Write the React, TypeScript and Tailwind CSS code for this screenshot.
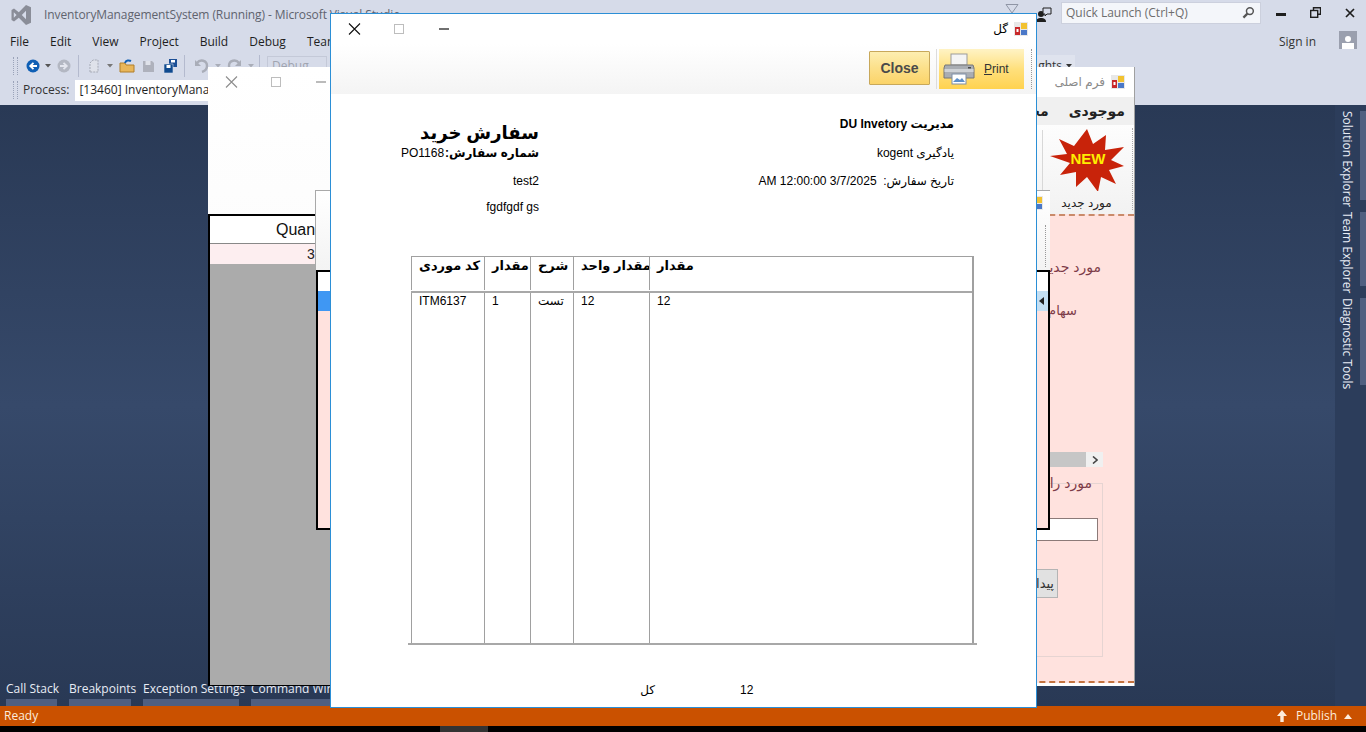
const sans = { fontFamily: '"Open Sans", sans-serif' };

function FormIcon({ className = '' }: { className?: string }) {
  return (
    <svg viewBox="0 0 14 14" className={className}>
      <rect width="14" height="14" fill="#e8e8e8" />
      <rect x="7" y="1" width="6" height="6" fill="#f2c230" />
      <rect x="1" y="5" width="5" height="8" fill="#c8282a" />
      <rect x="7" y="8" width="6" height="5" fill="#4a78c8" />
      <rect x="2.5" y="7" width="2" height="3" fill="#fff" />
    </svg>
  );
}

function Caret({ color = '#555' }: { color?: string }) {
  return (
    <svg viewBox="0 0 6 4" className="w-[6px] h-[4px]">
      <path d="M0 0h6L3 3.5z" fill={color} />
    </svg>
  );
}

function Sep() {
  return <div className="w-px h-[22px] bg-[#b4bace]" />;
}

function Grip() {
  return <div className="w-[5px] self-stretch my-[3px] border-x border-dotted border-[#9aa2b8]" />;
}

function VsLogo() {
  return (
    <svg viewBox="0 0 22 22" className="w-[22px] h-[22px]">
      <path
        d="M16 1l5 2.2v15.6L16 21 8.8 13.8 4 17.5 1.5 16V6L4 4.5 8.8 8.2zM16 6.8L11.8 11 16 15.2zM3.8 8.2v5.6L6.6 11z"
        fill="#8a8d98"
        fillRule="evenodd"
      />
    </svg>
  );
}

function Printer() {
  return (
    <svg viewBox="0 0 32 32" className="w-[32px] h-[32px]">
      <rect x="8" y="1" width="16" height="11" fill="#f4f4f4" stroke="#9b9b9b" />
      <path d="M2 12h28l1 3v10H1V15z" fill="#a9adb3" stroke="#777" />
      <rect x="1.5" y="16" width="29" height="3" fill="#cfd2d6" />
      <rect x="25" y="14" width="3" height="1.5" fill="#4a4a4a" />
      <rect x="9" y="21" width="14" height="10" fill="#fff" stroke="#7f8fa8" />
      <path d="M10 29l4-4 3 2 2-2 3 4z" fill="#5d8fc9" />
    </svg>
  );
}

function NewBurst() {
  return (
    <svg viewBox="0 0 80 64" className="w-[80px] h-[64px]">
      <path
        d="M40 2l6 15 13-9-1 15 19-3-13 13 13 6-15 4 7 14-15-7-3 15-11-15-11 10v-15l-16 3 10-12L3 29l17-2-8-15 15 7z"
        fill="#c8230a"
      />
      <text
        x="41"
        y="37"
        textAnchor="middle"
        fontSize="15"
        fontWeight="900"
        fontFamily='"Liberation Sans", sans-serif'
        fill="#ffee00"
      >
        NEW
      </text>
    </svg>
  );
}

function WinButtons({ tone }: { tone: string }) {
  return (
    <svg viewBox="0 0 102 14" className="w-[102px] h-[14px]">
      <path d="M1 1.5l11 11M12 1.5l-11 11" stroke={tone} strokeWidth="1.1" fill="none" />
      <rect x="46.5" y="2.5" width="9" height="9" fill="none" stroke="#bdbdbd" />
      <path d="M91 7h10" stroke={tone} strokeWidth="1.2" />
    </svg>
  );
}

const menus = ['File', 'Edit', 'View', 'Project', 'Build', 'Debug', 'Team'];
const bottomTabs = [
  { label: 'Call Stack', w: 'w-[51px]' },
  { label: 'Breakpoints', w: 'w-[62px]' },
  { label: 'Exception Settings', w: 'w-[96px]' },
  { label: 'Command Window', w: 'w-[90px]' },
];
const sideTabs = [
  { label: 'Solution Explorer', h: 'h-[89px]' },
  { label: 'Team Explorer', h: 'h-[74px]' },
  { label: 'Diagnostic Tools', h: 'h-[87px]' },
];

function Shell() {
  return (
    <div className="absolute inset-0 flex flex-col bg-[#d6dbe9] text-[#1e1e1e] text-[12px]" style={sans}>
      <div className="h-[30px] flex items-center shrink-0">
        <div className="ml-[10px] w-[34px]">
          <VsLogo />
        </div>
        <span className="text-[#60636e] text-[12px] whitespace-nowrap tracking-[-0.1px]">
          InventoryManagementSystem (Running) - Microsoft Visual Studio
        </span>
        <div className="ml-auto flex items-center">
          <svg viewBox="0 0 14 10" className="w-[14px] h-[10px] mr-[17px] -mt-[12px]">
            <path d="M1 .5h12L7 9z" fill="none" stroke="#8f95a5" />
          </svg>
          <svg viewBox="0 0 16 16" className="w-[16px] h-[16px] mr-[9px]">
            <circle cx="5" cy="7" r="3" fill="#1e1e1e" />
            <path d="M0 15c0-3 2-4 5-4s5 1 5 4z" fill="#1e1e1e" />
            <path d="M7 1h8v6h-4l-2 2V7H7z" fill="#d6dbe9" stroke="#1e1e1e" />
          </svg>
          <div className="w-[200px] h-[22px] -mt-[5px] bg-[#f4f6fa] border border-[#ccd0dd] flex items-center justify-between pl-[4px] pr-[5px] text-[#6d6d6d]">
            <span>Quick Launch (Ctrl+Q)</span>
            <svg viewBox="0 0 14 14" className="w-[13px] h-[13px]">
              <circle cx="8.5" cy="5.5" r="3.7" fill="none" stroke="#555" strokeWidth="1.6" />
              <path d="M5.8 8.2L1.5 12.5" stroke="#555" strokeWidth="2.4" />
            </svg>
          </div>
          <div className="w-[105px] flex items-center -mt-[5px] pl-[15px]">
            <div className="w-[10px] h-[3px] bg-[#1e1e1e] mt-[3px]" />
            <svg viewBox="0 0 11 11" className="w-[11px] h-[11px] ml-[24px]">
              <path d="M3.5 3V.8h7v6.4H8" fill="none" stroke="#1e1e1e" strokeWidth="1.4" />
              <rect x=".7" y="3.5" width="7" height="6.8" fill="none" stroke="#1e1e1e" strokeWidth="1.4" />
            </svg>
            <svg viewBox="0 0 10 10" className="w-[10px] h-[10px] ml-[24px]">
              <path d="M1 1l8 8M9 1L1 9" stroke="#1e1e1e" strokeWidth="1.7" />
            </svg>
          </div>
        </div>
      </div>

      <div className="h-[24px] flex items-center shrink-0">
        <div className="flex pl-[10px] gap-[21px] text-[12px]">
          {menus.map((m) => (
            <span key={m}>{m}</span>
          ))}
        </div>
        <span className="ml-auto text-[#333]">Sign in</span>
        <div className="ml-[23px] mr-[9px] -mt-[4px] w-[18px] h-[18px] bg-[#9a9fae] flex flex-col items-center justify-end overflow-hidden">
          <div className="w-[6px] h-[6px] rounded-full bg-white mb-px" />
          <div className="w-[12px] h-[6px] bg-white" />
        </div>
      </div>

      <div className="h-[24px] flex items-center shrink-0 pl-[13px]">
        <Grip />
        <svg viewBox="0 0 14 14" className="w-[14px] h-[14px] ml-[8px]">
          <circle cx="7" cy="7" r="6.5" fill="#0f5fb5" />
          <path d="M11 7H5M7.5 3.8L4.2 7l3.3 3.2" stroke="#fff" strokeWidth="1.8" fill="none" />
        </svg>
        <div className="ml-[5px]">
          <Caret />
        </div>
        <svg viewBox="0 0 14 14" className="w-[14px] h-[14px] ml-[6px]">
          <circle cx="7" cy="7" r="6.5" fill="#b3b7c2" />
          <path d="M3 7h6M6.5 3.8L9.8 7l-3.3 3.2" stroke="#e4e6ee" strokeWidth="1.8" fill="none" />
        </svg>
        <div className="ml-[7px]">
          <Sep />
        </div>
        <svg viewBox="0 0 14 14" className="w-[14px] h-[14px] ml-[8px]">
          <path d="M3 13V4l3-3h5v12z" fill="#dfe2ea" stroke="#a5a9b5" strokeDasharray="2 1" />
        </svg>
        <div className="ml-[6px]">
          <Caret color="#777" />
        </div>
        <svg viewBox="0 0 16 14" className="w-[16px] h-[14px] ml-[6px]">
          <path d="M1 4h5l1 2h8v7H1z" fill="#e8b65a" stroke="#b07f2a" />
          <path d="M6 4c1-3 4-3 6-2" stroke="#0f5fb5" strokeWidth="2" fill="none" />
        </svg>
        <svg viewBox="0 0 13 13" className="w-[13px] h-[13px] ml-[7px]">
          <path d="M1 1h9l2 2v9H1z" fill="#aeb1bc" />
          <rect x="3.5" y="1" width="5" height="4" fill="#dfe2ea" />
        </svg>
        <svg viewBox="0 0 14 14" className="w-[14px] h-[14px] ml-[9px]">
          <path d="M5 0h8v8H5z" fill="#1c4f96" />
          <path d="M0 5h9v9H0z" fill="#0f4a8f" stroke="#d6dbe9" strokeWidth=".6" />
          <rect x="2.5" y="6" width="4" height="3" fill="#fff" />
          <rect x="7" y="1" width="4" height="2.5" fill="#fff" />
        </svg>
        <div className="ml-[6px]">
          <Sep />
        </div>
        <svg viewBox="0 0 15 14" className="w-[15px] h-[14px] ml-[9px]">
          <path d="M3 4c3-4 10-3 10 3 0 3-2 5-5 6" fill="none" stroke="#a9adb8" strokeWidth="2.4" />
          <path d="M1 1v6h6z" fill="#a9adb8" />
        </svg>
        <div className="ml-[6px]">
          <Caret color="#a9adb8" />
        </div>
        <svg viewBox="0 0 15 14" className="w-[15px] h-[14px] ml-[6px]">
          <path d="M12 4C9 0 2 1 2 7c0 3 2 5 5 6" fill="none" stroke="#a9adb8" strokeWidth="2.4" />
          <path d="M14 1v6H8z" fill="#a9adb8" />
        </svg>
        <div className="ml-[6px]">
          <Caret color="#a9adb8" />
        </div>
        <div className="ml-[5px]">
          <Sep />
        </div>
        <div className="ml-[7px] w-[60px] h-[20px] border border-[#c4c9d8] text-[#a0a4b0] pl-[4px] leading-[18px]">
          Debug
        </div>
        <div className="ml-auto mr-[291px] w-[39px] h-[22px] bg-[#dfe3ee] flex items-center justify-end gap-[4px] pr-[3px] text-[#333]">
          <span>ghts</span>
          <Caret color="#333" />
        </div>
      </div>

      <div className="h-[27px] flex items-center shrink-0 pl-[13px] pb-[3px]">
        <Grip />
        <span className="ml-[5px] text-[#333]">Process:</span>
        <div className="ml-[6px] w-[280px] h-[21px] bg-white pl-[4px] leading-[20px] whitespace-nowrap overflow-hidden">
          [13460] InventoryManagementSystem.exe
        </div>
      </div>

      <div className="flex-1 flex bg-gradient-to-b from-[#293955] via-[#36496a] to-[#293955] relative">
        <div className="flex-1 flex items-end gap-[12px] pl-[6px]">
          {bottomTabs.map((t) => (
            <div key={t.label} className={`${t.w} shrink-0 h-[26px] flex flex-col justify-between`}>
              <span className="text-[#e8ecf5] leading-[17px] whitespace-nowrap">{t.label}</span>
              <div className="h-[7px] bg-[#4f5f80]" />
            </div>
          ))}
        </div>
        <div className="w-[31px] flex flex-col gap-[12px] pt-[6px] bg-[#2c3d5b] shrink-0">
          {sideTabs.map((t) => (
            <div key={t.label} className={`${t.h} flex`}>
              <span className="[writing-mode:vertical-rl] text-[#e8ecf5] leading-[25px] w-[25px] whitespace-nowrap">
                {t.label}
              </span>
              <div className="w-[6px] bg-[#4f5f80]" />
            </div>
          ))}
        </div>
      </div>

      <div className="h-[20px] bg-[#ca5100] text-[#fdecdc] flex items-center justify-between pl-[4px] pr-[14px] shrink-0">
        <span>Ready</span>
        <div className="flex items-center">
          <svg viewBox="0 0 10 12" className="w-[10px] h-[12px] mr-[9px]">
            <path d="M5 0l5 6H6.7v6H3.3V6H0z" fill="#fdecdc" />
          </svg>
          <span>Publish</span>
          <svg viewBox="0 0 8 5" className="w-[8px] h-[5px] ml-[7px]">
            <path d="M0 5h8L4 0z" fill="#fdecdc" />
          </svg>
        </div>
      </div>
      <div className="h-[6px] bg-black shrink-0 pl-[440px]">
        <div className="w-[48px] h-full bg-[#333]" />
      </div>
    </div>
  );
}

function BackRightWindow() {
  return (
    <div
      dir="rtl"
      className="absolute left-[1000px] top-[67px] w-[135px] h-[619px] bg-white border-r border-[#a0a0a0] flex flex-col"
      style={{ fontFamily: '"Liberation Sans", "DejaVu Sans", sans-serif' }}
    >
      <div className="h-[30px] flex items-center gap-[6px] pr-[9px] shrink-0 text-[12px] text-[#8a8a8a]">
        <FormIcon className="w-[14px] h-[14px]" />
        <span>فرم اصلی</span>
      </div>
      <div className="h-[28px] bg-[#f0f0f0] flex items-center gap-[20px] pr-[9px] text-[14px] font-bold shrink-0 text-[#222]">
        <span>موجودی</span>
        <span>محل</span>
      </div>
      <div className="h-[89px] bg-gradient-to-b from-[#fdfdfd] to-[#f2f2f2] flex items-start shrink-0">
        <div className="w-[3px] h-[82px] mt-[3px] mr-[1px] border-r border-dotted border-[#aaa]" />
        <div className="w-[87px] flex flex-col items-center pt-[2px]">
          <NewBurst />
          <span className="text-[12px] text-[#222] mt-[3px]">مورد جدید</span>
        </div>
        <div className="w-px h-[80px] mt-[5px] bg-[#d8d8d8]" />
      </div>
      <div className="flex-1 bg-[#ffe2de] border-t-2 border-dashed border-t-[#c98a6a] border-b-2 border-b-[#c4733f] mb-[3px] pr-[33px] flex flex-col text-[#7d3b48] text-[14px] mr-0">
        <span className="mt-[42px] leading-[18px]">مورد جدید</span>
        <span className="mt-[26px] mr-[24px] leading-[18px] text-[13px]">سهام موجود</span>
        <div className="mt-[132px] -mr-0 ml-[-40px] w-[98px] h-[15px] mr-[-2px] bg-[#f0f0f0] flex items-center">
          <div className="w-[17px] flex justify-center text-[#444]">
            <svg viewBox="0 0 6 8" className="w-[6px] h-[8px]">
              <path d="M1 .5L5 4 1 7.5" stroke="#444" strokeWidth="1.6" fill="none" />
            </svg>
          </div>
          <div className="flex-1 h-full bg-[#c6c6c6]" />
        </div>
        <div className="mt-[16px] mr-[-2px] ml-[-40px] h-[174px] border border-[#e6d4d2] pr-[10px]">
          <span className="block -mt-[10px] leading-[18px]">مورد را</span>
          <div className="mt-[26px] -mr-[6px] h-[23px] bg-white border border-[#8c7a78]" />
          <div className="mt-[28px] mr-[34px] w-[70px] h-[29px] bg-[#e1e1e1] border border-[#b4b4b4] text-[#333] leading-[27px] pr-[3px] text-[13px]">
            پیدا
          </div>
        </div>
      </div>
    </div>
  );
}

function BackLeftWindow() {
  return (
    <div
      className="absolute left-[208px] top-[67px] w-[130px] h-[619px] bg-gradient-to-b from-white to-[#f5f5f5] flex flex-col"
      style={{ fontFamily: '"Liberation Sans", sans-serif' }}
    >
      <div className="h-[147px] pt-[8px] pl-[17px] shrink-0">
        <WinButtons tone="#8d8d8d" />
      </div>
      <div className="flex-1 flex flex-col border-t-2 border-l-2 border-b border-black bg-[#ababab]">
        <div className="h-[28px] bg-white border-b border-[#888] pl-[66px] text-[16px] leading-[28px] text-[#111] whitespace-nowrap overflow-hidden">
          Quan
        </div>
        <div className="h-[20px] bg-[#fdeef0] pl-[97px] text-[14px] leading-[20px] text-[#222]">3</div>
      </div>
    </div>
  );
}

function MiddleWindow() {
  return (
    <div className="absolute left-[315px] top-[190px] w-[735px] h-[340px] flex flex-col bg-white border-t border-l border-[#a9a9a9] overflow-visible">
      <div className="h-[79px] bg-gradient-to-b from-white to-[#f3f3f3] relative shrink-0">
        <FormIcon className="absolute right-[7px] top-[5px] w-[14px] h-[14px]" />
        <div className="absolute right-[2px] top-[34px] w-[3px] h-[42px] border-l border-dotted border-[#999]" />
      </div>
      <div className="flex-1 flex flex-col border-t-2 border-l-2 border-r-2 border-b-2 border-black bg-[#ffe2de]">
        <div className="h-[19px] bg-white shrink-0" />
        <div className="h-[20px] bg-[#3f97f3] flex justify-end shrink-0">
          <div className="w-[14px] bg-[#c4dff3] flex items-center justify-center">
            <svg viewBox="0 0 5 8" className="w-[5px] h-[8px]">
              <path d="M5 0v8L0 4z" fill="#222" />
            </svg>
          </div>
        </div>
      </div>
    </div>
  );
}

const columns = [
  { head: 'کد موردی', cell: 'ITM6137' },
  { head: 'مقدار', cell: '1' },
  { head: 'شرح', cell: 'تست' },
  { head: 'مقدار واحد', cell: '12' },
  { head: 'مقدار', cell: '12' },
];

function FrontWindow() {
  const font = { fontFamily: '"Liberation Sans", "DejaVu Sans", sans-serif' };
  return (
    <div
      className="absolute left-[330px] top-[13px] w-[707px] h-[695px] bg-white border border-[#2b8fd6] flex flex-col text-black"
      style={font}
    >
      <div className="h-[30px] flex items-center justify-between pl-[17px] pr-[8px] shrink-0">
        <WinButtons tone="#111" />
        <div className="flex items-center gap-[6px] text-[12px]">
          <span dir="rtl">گل</span>
          <FormIcon className="w-[14px] h-[14px]" />
        </div>
      </div>
      <div className="h-[50px] bg-gradient-to-b from-white to-[#f4f4f4] flex items-center justify-end shrink-0">
        <div className="w-[61px] h-[34px] mb-[2px] rounded-[1px] border border-[#c8a85a] bg-gradient-to-b from-[#fdeeb0] via-[#fce08a] to-[#fbd368] text-[14px] font-bold text-[#4a4a4a] flex items-center justify-center">
          Close
        </div>
        <div className="w-px h-[40px] bg-[#dcdcdc] ml-[6px]" />
        <div className="w-[85px] h-[40px] ml-[2px] bg-gradient-to-b from-[#fff3c4] via-[#ffe07c] to-[#ffd24e] flex items-center pl-[4px] gap-[9px] text-[12px] text-[#333]">
          <Printer />
          <span>
            <span className="underline">P</span>rint
          </span>
        </div>
        <div className="w-[3px] h-[40px] ml-[7px] mr-[2px] border-l border-dotted border-[#999]" />
      </div>

      <div className="flex-1 flex flex-col text-[12px] leading-[16px]">
        <div className="flex h-[162px] shrink-0">
          <div dir="rtl" className="ml-[70px] w-[138px] pt-[27px] flex flex-col">
            <div className="text-[18px] font-bold leading-[24px]">سفارش خرید</div>
            <div className="flex justify-between">
              <span className="font-bold">شماره سفارش:</span>
              <span>PO1168</span>
            </div>
            <div className="mt-[12px]">test2</div>
            <div className="mt-[10px]">fgdfgdf gs</div>
          </div>
          <div dir="rtl" className="ml-[215px] w-[200px] pt-[22px] flex flex-col">
            <div className="font-bold">مدیریت DU Invetory</div>
            <div className="mt-[13px]">یادگیری kogent</div>
            <div className="mt-[12px] whitespace-nowrap">تاریخ سفارش:&nbsp; 3/7/2025 12:00:00 AM</div>
          </div>
        </div>

        <div className="ml-[77px] w-[569px] shrink-0 flex flex-col">
          <div className="mx-[3px] grid grid-cols-[73px_46px_43px_76px_1fr] border-t border-r-2 border-[#a0a0a0]">
            {columns.map((c) => (
              <div key={c.cell + c.head} className="h-[33px] border-l border-[#a0a0a0] pl-[7px] pr-[8px] pt-[1px]">
                <span dir="rtl" className="text-[13px] font-bold whitespace-nowrap">
                  {c.head}
                </span>
              </div>
            ))}
          </div>
          <div className="mx-[3px] h-[3px] border-r-2 border-[#a0a0a0] flex items-center">
            <div className="h-[2px] w-full bg-[#a8a8a8]" />
          </div>
          <div className="mx-[3px] grid grid-cols-[73px_46px_43px_76px_1fr] border-r-2 border-[#a0a0a0]">
            {columns.map((c) => (
              <div key={c.cell + c.head} className="h-[350px] border-l border-[#a0a0a0] pl-[7px] text-[12px]">
                {c.cell}
              </div>
            ))}
          </div>
          <div className="h-[2px] bg-[#a8a8a8]" />
        </div>

        <div className="mt-[37px] ml-[310px] flex">
          <span dir="rtl" className="w-[14px] whitespace-nowrap">کل</span>
          <span className="ml-[85px]">12</span>
        </div>
      </div>
    </div>
  );
}

export default function App() {
  return (
    <div className="relative w-[1366px] h-[732px] overflow-hidden">
      <Shell />
      <BackRightWindow />
      <BackLeftWindow />
      <MiddleWindow />
      <FrontWindow />
    </div>
  );
}
